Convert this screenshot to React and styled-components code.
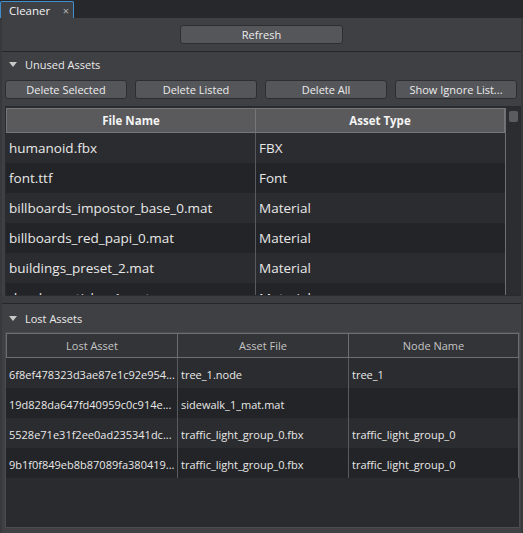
import React from 'react';
import styled, { createGlobalStyle } from 'styled-components';

const GlobalStyle = createGlobalStyle`
  html, body {
    margin: 0;
    padding: 0;
    background: #3f4044;
  }
  body {
    font-family: "Open Sans", "Noto Sans", sans-serif;
    font-size: 11px;
    color: #e6e6e6;
  }
`;

const Window = styled.div`
  width: 523px;
  height: 533px;
  display: flex;
  flex-direction: column;
  overflow: hidden;
  background: #3f4044;
`;

const TabBar = styled.div`
  height: 18px;
  flex-shrink: 0;
  display: flex;
  align-items: flex-end;
  background: #27282b;
`;

const Tab = styled.div`
  width: 74px;
  height: 17px;
  box-sizing: border-box;
  display: flex;
  align-items: center;
  justify-content: space-between;
  padding: 0 4px 0 8px;
  background: #3f4044;
  border: 1px solid #3f8fcf;
  border-bottom: none;
  border-radius: 2px 2px 0 0;
  font-size: 11.5px;
  color: #f2f2f2;
`;

const Close = styled.span`
  font-size: 11px;
  color: #b4b4b4;
`;

const Panel = styled.div`
  flex: 1;
  display: flex;
  flex-direction: column;
  border-left: 2px solid #38393c;
  border-right: 2px solid #38393c;
  min-height: 0;
`;

const RefreshRow = styled.div`
  height: 33px;
  box-sizing: border-box;
  padding-top: 7px;
  display: flex;
  justify-content: center;
  flex-shrink: 0;
`;

const Button = styled.button`
  width: ${p => p.$width || 122}px;
  height: 19px;
  box-sizing: border-box;
  padding: 0;
  background: #55565a;
  border: 1px solid #2d2e31;
  border-radius: 3px;
  color: #ececec;
  font-family: inherit;
  font-size: 11px;
  line-height: 17px;
`;

const Divider = styled.div`
  height: 1px;
  background: #25262a;
  flex-shrink: 0;
`;

const SectionHeader = styled.div`
  height: ${p => p.$height}px;
  flex-shrink: 0;
  display: flex;
  align-items: center;
  padding-left: 7px;
  gap: 8px;
  font-size: 11px;
  color: #eaeaea;
`;

const Arrow = styled.span`
  width: 0;
  height: 0;
  border-left: 4px solid transparent;
  border-right: 4px solid transparent;
  border-top: 5px solid #c8c8c8;
  margin-top: 1px;
`;

const ButtonRow = styled.div`
  display: flex;
  gap: 8px;
  padding: 4px 0 7px 3px;
  flex-shrink: 0;
`;

const Frame = styled.div`
  margin-left: 3px;
  box-sizing: border-box;
  border: 1px solid ${p => p.$border};
  background: #2a2b2e;
  flex-shrink: 0;
  overflow: hidden;
`;

const UnusedFrame = styled(Frame)`
  width: 516px;
  height: 190px;
  padding-top: 1px;
  display: flex;
`;

const LostFrame = styled(Frame)`
  width: 515px;
  height: 196px;
`;

const Table = styled.div`
  display: grid;
  grid-template-columns: ${p => p.$columns};
  grid-template-rows: 25px;
  grid-auto-rows: 30px;
  align-content: start;
  ${p => p.$divider && `border-right: 1px solid ${p.$divider};`}
`;

const HeadCell = styled.div`
  height: 25px;
  box-sizing: border-box;
  display: flex;
  align-items: center;
  justify-content: center;
  background: ${p => (p.$strong ? '#5a5a5d' : '#333437')};
  border-top: 1px solid ${p => (p.$strong ? '#767679' : '#6d6e71')};
  border-bottom: 1px solid ${p => (p.$strong ? '#767679' : '#6d6e71')};
  border-left: 1px solid ${p => (p.$strong ? '#767679' : '#6d6e71')};
  ${p => p.$last && `border-right: 1px solid ${p.$strong ? '#767679' : '#6d6e71'};`}
  font-weight: ${p => (p.$strong ? 700 : 400)};
  font-size: ${p => (p.$strong ? 11.5 : 11)}px;
  color: ${p => (p.$strong ? '#f4f4f4' : '#c4c4c4')};
`;

const Cell = styled.div`
  height: 30px;
  box-sizing: border-box;
  display: flex;
  align-items: center;
  padding-left: 3px;
  padding-top: ${p => (p.$large ? 0 : 2)}px;
  white-space: nowrap;
  overflow: hidden;
  background: ${p => (p.$odd ? '#232427' : '#2b2c2f')};
  ${p => p.$split && 'border-left: 1px solid #5a5b5e;'}
  ${p => p.$edge && 'border-right: 1px solid #5a5b5e;'}
  font-size: ${p => (p.$large ? 13.5 : 11)}px;
  color: #e8e8e8;
`;

const Scrollbar = styled.div`
  width: 15px;
  flex-shrink: 0;
  background: #2c2d30;
  padding: 3px 0 0 3px;
  box-sizing: border-box;
`;

const Handle = styled.div`
  width: 9px;
  height: 11px;
  border-radius: 2px;
  background: #5b5c5f;
`;

const Splitter = styled.div`
  height: 8px;
  flex-shrink: 0;
  box-sizing: border-box;
  background: #3b3c40;
  border-bottom: 1px solid #25262a;
`;

const unused = [
  ['humanoid.fbx', 'FBX'],
  ['font.ttf', 'Font'],
  ['billboards_impostor_base_0.mat', 'Material'],
  ['billboards_red_papi_0.mat', 'Material'],
  ['buildings_preset_2.mat', 'Material'],
  ['decals_particles_1.mat', 'Material'],
];

const lost = [
  ['6f8ef478323d3ae87e1c92e954...', 'tree_1.node', 'tree_1'],
  ['19d828da647fd40959c0c914e...', 'sidewalk_1_mat.mat', ''],
  ['5528e71e31f2ee0ad235341dc...', 'traffic_light_group_0.fbx', 'traffic_light_group_0'],
  ['9b1f0f849eb8b87089fa380419...', 'traffic_light_group_0.fbx', 'traffic_light_group_0'],
];

export default function App() {
  return (
    <Window>
      <GlobalStyle />
      <TabBar>
        <Tab>
          Cleaner <Close>×</Close>
        </Tab>
      </TabBar>
      <Panel>
        <RefreshRow>
          <Button $width={163}>Refresh</Button>
        </RefreshRow>
        <Divider />
        <SectionHeader $height={24}>
          <Arrow />
          Unused Assets
        </SectionHeader>
        <ButtonRow>
          <Button>Delete Selected</Button>
          <Button>Delete Listed</Button>
          <Button>Delete All</Button>
          <Button>Show Ignore List...</Button>
        </ButtonRow>
        <UnusedFrame $border="#2a2b2e">
          <Table $columns="249px 250px" $divider="#6f6f72" style={{ width: 499 }}>
            <HeadCell $strong>File Name</HeadCell>
            <HeadCell $strong $last>Asset Type</HeadCell>
            {unused.map(([name, type], i) => (
              <React.Fragment key={name}>
                <Cell $large $odd={i % 2 === 1}>{name}</Cell>
                <Cell $large $odd={i % 2 === 1} $split>{type}</Cell>
              </React.Fragment>
            ))}
          </Table>
          <Scrollbar>
            <Handle />
          </Scrollbar>
        </UnusedFrame>
        <Splitter />
        <SectionHeader $height={28}>
          <Arrow />
          Lost Assets
        </SectionHeader>
        <LostFrame $border="#4b4c4f">
          <Table $columns="171px 171px 171px">
            <HeadCell>Lost Asset</HeadCell>
            <HeadCell>Asset File</HeadCell>
            <HeadCell $last>Node Name</HeadCell>
            {lost.map(([hash, file, node], i) => (
              <React.Fragment key={hash}>
                <Cell $odd={i % 2 === 1}>{hash}</Cell>
                <Cell $odd={i % 2 === 1} $split>{file}</Cell>
                <Cell $odd={i % 2 === 1} $split $edge>{node}</Cell>
              </React.Fragment>
            ))}
          </Table>
        </LostFrame>
      </Panel>
    </Window>
  );
}
